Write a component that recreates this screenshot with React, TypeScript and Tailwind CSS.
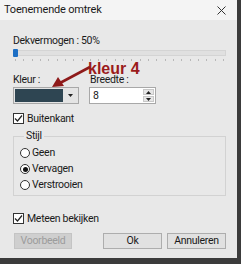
import { useState } from 'react'

const font = { fontFamily: 'Roboto, "Noto Sans", sans-serif' }

function Check({ checked, label }: { checked: boolean; label: string }) {
  return (
    <div className="flex items-center h-[13px] gap-[3px]">
      <span className="w-[11px] h-[11px] border border-[#333] bg-white flex items-center justify-center">
        {checked && (
          <svg width="9" height="9" viewBox="0 0 9 9">
            <path d="M1 4.5 L3.5 7 L8 1.5" fill="none" stroke="#222" strokeWidth="1.2" />
          </svg>
        )}
      </span>
      <span>{label}</span>
    </div>
  )
}

function Radio({ checked, label }: { checked: boolean; label: string }) {
  return (
    <div className="flex items-center h-[16px] gap-[2px]">
      <span className="w-[10px] h-[10px] rounded-full border border-[#333] bg-white flex items-center justify-center">
        {checked && <span className="w-[5px] h-[5px] rounded-full bg-[#111]" />}
      </span>
      <span>{label}</span>
    </div>
  )
}

export default function App() {
  const [ticks] = useState(() => Array.from({ length: 26 }, (_, i) => i))

  return (
    <div
      className="w-[241px] h-[264px] bg-[#3b3b3b] overflow-hidden text-[10.5px] tracking-[-0.3px] text-[#1a1a1a]"
      style={font}
    >
      <div className="w-[237px] h-[258px] bg-[#e8e8e8] relative flex flex-col">
        {/* title bar */}
        <div className="h-[20px] bg-[#f4f4f4] flex items-center justify-between pl-[4px] pr-[11px]">
          <span className="leading-[14px] text-[11px] tracking-[-0.2px]">Toenemende omtrek</span>
          <svg width="9" height="9" viewBox="0 0 9 9">
            <path d="M0.5 0.5 L8.5 8.5 M8.5 0.5 L0.5 8.5" stroke="#333" strokeWidth="1" />
          </svg>
        </div>

        <div className="pl-[13px] pr-[11px] flex flex-col">
          <div className="mt-[14px] h-[14px] leading-[14px]">Dekvermogen : 50%</div>

          {/* slider */}
          <div className="mt-[1px] h-[8px] relative">
            <div className="absolute left-0 right-0 top-[1px] h-[6px] bg-[#e0e0e0] border border-[#d4d4d4]" />
            <div className="absolute left-0 top-0 w-[5px] h-[8px] rounded-[1px] bg-[#1d6fc4]" />
          </div>
          <div className="mt-[2px] h-[2px] flex justify-between px-[2px]">
            {ticks.map((t) => (
              <span key={t} className="w-[1px] h-[2px] bg-[#b8b8b8]" />
            ))}
          </div>

          {/* labels */}
          <div className="mt-[13px] h-[12px] leading-[12px] flex">
            <span className="w-[77px]">Kleur :</span>
            <span>Breedte :</span>
          </div>

          {/* inputs */}
          <div className="mt-[1px] h-[17px] flex">
            <div className="w-[66px] h-[17px] border border-[#a8a8a8] bg-[#e4e4e4] flex p-[1px]">
              <div className="flex-1 bg-[#2e4552]" />
              <div className="w-[14px] flex items-center justify-center">
                <svg width="5" height="3" viewBox="0 0 5 3">
                  <path d="M0 0 H5 L2.5 3 Z" fill="#222" />
                </svg>
              </div>
            </div>
            <div className="ml-[10px] w-[67px] h-[17px] border border-[#a8a8a8] bg-white flex items-center pl-[3px] pr-[1px]">
              <span className="flex-1 leading-[14px]">8</span>
              <div className="w-[11px] flex flex-col gap-[1px]">
                <div className="h-[6px] bg-[#e6e6e6] border border-[#c8c8c8] flex items-center justify-center">
                  <svg width="5" height="3" viewBox="0 0 5 3">
                    <path d="M0 3 H5 L2.5 0 Z" fill="#222" />
                  </svg>
                </div>
                <div className="h-[6px] bg-[#e6e6e6] border border-[#c8c8c8] flex items-center justify-center">
                  <svg width="5" height="3" viewBox="0 0 5 3">
                    <path d="M0 0 H5 L2.5 3 Z" fill="#222" />
                  </svg>
                </div>
              </div>
            </div>
          </div>

          <div className="mt-[8px]">
            <Check checked label="Buitenkant" />
          </div>

          {/* group */}
          <fieldset className="mt-[5px] border border-[#d2d2d2] h-[66px] pl-[6px]">
            <legend className="px-[2px] ml-[4px] leading-[12px]">Stijl</legend>
            <div className="mt-[3px] flex flex-col">
              <Radio checked={false} label="Geen" />
              <Radio checked label="Vervagen" />
              <Radio checked={false} label="Verstrooien" />
            </div>
          </fieldset>

          <div className="mt-[16px]">
            <Check checked label="Meteen bekijken" />
          </div>

          {/* buttons */}
          <div className="mt-[8px] flex h-[16px]">
            <div className="w-[58px] ml-[1px] border border-[#c4c4c4] bg-[#cfcfcf] text-[#9c9c9c] flex items-center justify-center">
              Voorbeeld
            </div>
            <div className="w-[59px] ml-[31px] border border-[#adadad] bg-[#e1e1e1] flex items-center justify-center">
              Ok
            </div>
            <div className="w-[59px] ml-[5px] border border-[#adadad] bg-[#e1e1e1] flex items-center justify-center">
              Annuleren
            </div>
          </div>
        </div>

        {/* annotation */}
        <span
          className="absolute left-[88px] top-[64px] text-[16px] font-bold leading-[10px] tracking-normal text-[#9b1b1b]"
          style={{ fontFamily: '"Liberation Sans", Arial, sans-serif' }}
        >
          kleur 4
        </span>
        <svg className="absolute left-[48px] top-[64px]" width="44" height="28" viewBox="0 0 44 28">
          <path d="M42 3 L12 19" stroke="#8e1a1a" strokeWidth="2.6" />
          <path d="M4 23 L10 13 L16 22 Z" fill="#8e1a1a" />
        </svg>
      </div>
    </div>
  )
}
